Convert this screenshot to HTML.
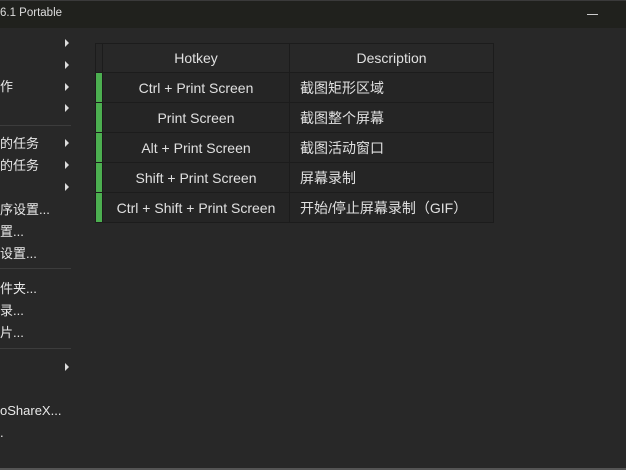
<html><head><style>
body{margin:0;width:626px;height:470px;background:#282828;font-family:"Liberation Sans","Noto Sans CJK SC",sans-serif;color:#e6e6e6;position:relative;overflow:hidden;font-size:13px}
.tb{position:absolute;left:0;top:0;width:626px;height:28px;background:#20211d;border-top:1px solid #3a3a3a;box-sizing:border-box}
.tb span{position:absolute;left:0;top:6px;font-size:11.5px;color:#ddd}
.min{position:absolute;left:587px;top:13px;width:11px;height:1px;background:#ccc}
.m{position:absolute;left:0;font-size:13px;color:#e8e8e8;white-space:nowrap;line-height:16px}
.a{position:absolute;left:65px;width:0;height:0;border-left:4px solid #ddd;border-top:4px solid transparent;border-bottom:4px solid transparent}
.sep{position:absolute;left:0;width:71px;height:1px;background:#3c3c3c}
table{position:absolute;left:95px;top:43px;border-collapse:collapse;background:#252525;table-layout:fixed;width:398px}
tr{height:30px}
tr.hd{height:29px}
td{border:1px solid #1c1c1c;padding:0;font-size:14px;color:#e0e0e0;overflow:hidden;white-space:nowrap}
td.g{background:#4caf50}
td.h{text-align:center}
td.d{padding-left:10px}
tr.hd td{background:#282828}
tr.hd td.g{background:#282828}
.bot{position:absolute;left:0;top:468px;width:626px;height:2px;background:#555}
</style></head><body>
<div class="tb"><span>6.1 Portable</span><div class="min"></div></div>
<div class="a" style="top:39px"></div>
<div class="a" style="top:61px"></div>
<div class="m" style="top:79px">作</div><div class="a" style="top:83px"></div>
<div class="a" style="top:104px"></div>
<div class="sep" style="top:125px"></div>
<div class="m" style="top:136px">的任务</div><div class="a" style="top:139px"></div>
<div class="m" style="top:158px">的任务</div><div class="a" style="top:161px"></div>
<div class="a" style="top:183px"></div>
<div class="m" style="top:202px">序设置...</div>
<div class="m" style="top:224px">置...</div>
<div class="m" style="top:246px">设置...</div>
<div class="sep" style="top:268px"></div>
<div class="m" style="top:281px">件夹...</div>
<div class="m" style="top:303px">录...</div>
<div class="m" style="top:325px">片...</div>
<div class="sep" style="top:348px"></div>
<div class="a" style="top:363px"></div>
<div class="m" style="top:403px">oShareX...</div>
<div class="m" style="top:425px">.</div>
<table>
<colgroup><col style="width:7px"><col style="width:187px"><col style="width:204px"></colgroup>
<tr class="hd"><td class="g"></td><td class="h">Hotkey</td><td class="h">Description</td></tr>
<tr><td class="g"></td><td class="h">Ctrl + Print Screen</td><td class="d">截图矩形区域</td></tr>
<tr><td class="g"></td><td class="h">Print Screen</td><td class="d">截图整个屏幕</td></tr>
<tr><td class="g"></td><td class="h">Alt + Print Screen</td><td class="d">截图活动窗口</td></tr>
<tr><td class="g"></td><td class="h">Shift + Print Screen</td><td class="d">屏幕录制</td></tr>
<tr><td class="g"></td><td class="h">Ctrl + Shift + Print Screen</td><td class="d">开始/停止屏幕录制（GIF）</td></tr>
</table>
<div class="bot"></div>
</body></html>
